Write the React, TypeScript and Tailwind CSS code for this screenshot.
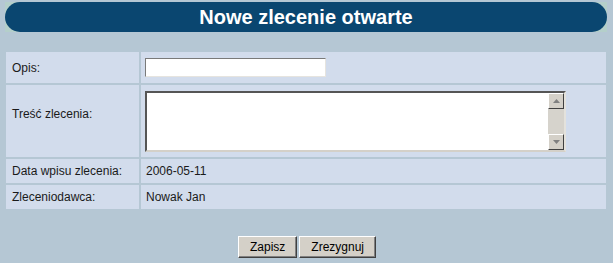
import React from "react";

type Row = { label: string; value?: string; kind: "input" | "textarea" | "text" };

const rows: Row[] = [
  { label: "Opis:", kind: "input" },
  { label: "Treść zlecenia:", kind: "textarea" },
  { label: "Data wpisu zlecenia:", value: "2006-05-11", kind: "text" },
  { label: "Zleceniodawca:", value: "Nowak Jan", kind: "text" },
];

function ScrollArrow({ dir }: { dir: "up" | "down" }) {
  return (
    <div className="w-[16px] h-[16px] bg-[#d4d0c8] border border-t-white border-l-white border-r-[#404040] border-b-[#404040] flex items-center justify-center">
      <svg width="7" height="4" viewBox="0 0 7 4">
        {dir === "up" ? (
          <polygon points="3.5,0 7,4 0,4" fill="#808080" />
        ) : (
          <polygon points="0,0 7,0 3.5,4" fill="#808080" />
        )}
      </svg>
    </div>
  );
}

function TextArea() {
  return (
    <div className="w-[421px] h-[61px] border-2 border-t-[#555] border-l-[#555] border-r-[#e4e2dc] border-b-[#d4d0c8] bg-white flex justify-end">
      <div className="w-[16px] h-full bg-[#d6d3cc] flex flex-col justify-between">
        <ScrollArrow dir="up" />
        <ScrollArrow dir="down" />
      </div>
    </div>
  );
}

function WinButton({ children }: { children: React.ReactNode }) {
  return (
    <button className="h-[22px] px-[11px] bg-[#d4d0c8] text-[12px] text-black border border-t-white border-l-white border-r-[#404040] border-b-[#404040] shadow-[inset_-1px_-1px_0_#808080]">
      {children}
    </button>
  );
}

export default function App() {
  return (
    <div
      className="w-[613px] h-[263px] bg-[#b5c7d4] pt-[2px] overflow-hidden"
      style={{ fontFamily: '"Liberation Sans", Arial, sans-serif' }}
    >
      {/* Title bar */}
      <div className="ml-[5px] w-[602px] h-[30px] bg-[#b4cfca]">
        <div className="h-full rounded-full bg-[#0a4670] flex items-center justify-center">
          <span className="text-white font-bold text-[20px] leading-none">Nowe zlecenie otwarte</span>
        </div>
      </div>

      {/* Form table */}
      <div className="ml-[6px] mt-[20px] w-[600px] grid grid-cols-[133px_1fr] gap-[2px] text-[12px] text-[#1a1a1a]">
        {rows.map((row) => {
          const h =
            row.kind === "input" ? "h-[31px]" : row.kind === "textarea" ? "h-[72px]" : "h-[24px]";
          return (
            <React.Fragment key={row.label}>
              <div
                className={`${h} bg-[#d2dcec] pl-[6px] flex ${
                  row.kind === "textarea" ? "items-start pt-[20px]" : "items-center"
                }`}
              >
                {row.label}
              </div>
              <div className={`${h} bg-[#d2dcec] pl-[4px] flex items-center`}>
                {row.kind === "input" && (
                  <div className="w-[181px] h-[19px] bg-white border border-t-[#7a7a7a] border-l-[#7a7a7a] border-r-[#e6e4df] border-b-[#e6e4df]" />
                )}
                {row.kind === "textarea" && <TextArea />}
                {row.kind === "text" && <span className="pl-[1px]">{row.value}</span>}
              </div>
            </React.Fragment>
          );
        })}
      </div>

      {/* Buttons */}
      <div className="mt-[27px] flex justify-center gap-[2px] pl-[1px]">
        <WinButton>Zapisz</WinButton>
        <WinButton>Zrezygnuj</WinButton>
      </div>
    </div>
  );
}
